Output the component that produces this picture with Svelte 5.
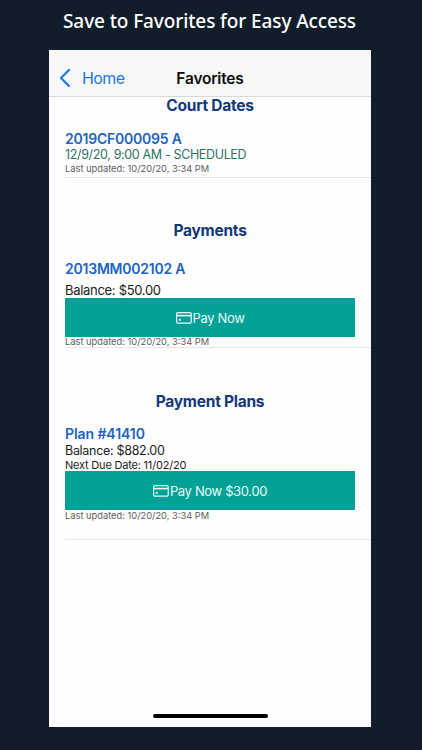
<script lang="ts">
  interface Favorite {
    kind: string;
    heading: string;
    title: string;
    status?: string;
    balance?: string;
    due?: string;
    pay?: string;
    updated: string;
  }

  const favorites: Favorite[] = [
    {
      kind: 'court',
      heading: 'Court Dates',
      title: '2019CF000095 A',
      status: '12/9/20, 9:00 AM - SCHEDULED',
      updated: '10/20/20, 3:34 PM',
    },
    {
      kind: 'payment',
      heading: 'Payments',
      title: '2013MM002102 A',
      balance: '$50.00',
      pay: 'Pay Now',
      updated: '10/20/20, 3:34 PM',
    },
    {
      kind: 'plan',
      heading: 'Payment Plans',
      title: 'Plan #41410',
      balance: '$882.00',
      due: '11/02/20',
      pay: 'Pay Now $30.00',
      updated: '10/20/20, 3:34 PM',
    },
  ];
</script>

<div class="promo">
  <h1 class="caption"><span>Save to Favorites for Easy Access</span></h1>

  <main class="phone">
    <header class="navbar">
      <a class="back" href="#home">
        <svg width="12" height="20" viewBox="0 0 12 20" fill="none" stroke="currentColor" stroke-width="2.3">
          <path stroke-linecap="round" stroke-linejoin="round" d="M10 2 2 10l8 8" />
        </svg>
        <span>Home</span>
      </a>
      <span class="nav-title">Favorites</span>
    </header>

    {#each favorites as item}
      <section class={item.kind}>
        <h2><span>{item.heading}</span></h2>
        <div class="entry">
          <a class="title" href="#detail">{item.title}</a>
          {#if item.status}
            <p class="status">{item.status}</p>
          {/if}
          {#if item.balance}
            <p class="balance">Balance: {item.balance}</p>
          {/if}
          {#if item.due}
            <p class="due">Next Due Date: {item.due}</p>
          {/if}
          {#if item.pay}
            <button class="pay">
              <svg width="16" height="12" viewBox="0 0 16 12" fill="none" stroke="currentColor">
                <rect x="0.6" y="0.6" width="14.6" height="10.6" rx="1.2" stroke-width="1.2" />
                <path d="M0.6 3.6h14.6" stroke-width="1.6" />
                <path d="M2.8 7.8h1.9" stroke-width="1.9" />
              </svg>
              <span>{item.pay}</span>
            </button>
          {/if}
          <p class="updated">Last updated: {item.updated}</p>
        </div>
      </section>
    {/each}

    <div class="home-indicator"></div>
  </main>
</div>

<style>
  .promo {
    box-sizing: border-box;
    width: 422px;
    height: 750px;
    background: #111d2a;
    font-family: Inter, 'Liberation Sans', sans-serif;
    overflow: hidden;
  }
  .caption {
    margin: 0;
    height: 50px;
    padding-top: 8px;
    box-sizing: border-box;
    text-align: center;
    font-family: 'Noto Sans', 'Open Sans', sans-serif;
    font-size: 19px;
    font-weight: 500;
    letter-spacing: -0.11px;
    line-height: 27px;
    color: #fff;
    white-space: nowrap;
  }
  .caption span {
    margin-right: 3px;
  }
  .phone {
    display: flex;
    flex-direction: column;
    box-sizing: border-box;
    width: 322px;
    height: 677px;
    margin-left: 49px;
    background: #fefefe;
  }
  .navbar {
    display: grid;
    grid-template-columns: 1fr auto 1fr;
    align-items: center;
    box-sizing: border-box;
    flex: none;
    height: 47px;
    padding: 10px 10px 0;
    background: #f7f7f7;
    border-bottom: 1px solid #d9d9da;
  }
  .back {
    display: flex;
    align-items: center;
    gap: 11px;
    color: #2179e8;
    font-size: 16px;
    letter-spacing: -0.6px;
    text-decoration: none;
  }
  .nav-title {
    font-size: 15.5px;
    font-weight: 600;
    letter-spacing: -0.2px;
    color: #0b0b0b;
  }
  section {
    flex: none;
    box-sizing: border-box;
  }
  .court {
    height: 123px;
  }
  .payment {
    height: 171px;
  }
  .plan {
    height: 220px;
  }
  h2 {
    margin: 0;
    height: 34px;
    text-align: center;
    font-size: 15.5px;
    font-weight: 700;
    letter-spacing: -0.25px;
    line-height: 18px;
    color: #12387c;
  }
  .payment h2 {
    height: 41px;
    padding-top: 2px;
    box-sizing: border-box;
  }
  .plan h2 {
    height: 35px;
    padding-top: 2px;
    box-sizing: border-box;
  }
  .entry {
    display: flex;
    flex-direction: column;
    box-sizing: border-box;
    margin-left: 16px;
    padding-right: 16px;
    border-bottom: 1px solid #e4e5e7;
  }
  .court .entry {
    height: 47px;
  }
  .payment .entry {
    height: 87px;
  }
  .plan .entry {
    height: 114px;
  }
  p {
    margin: 0;
    white-space: nowrap;
  }
  .title {
    font-size: 14px;
    font-weight: 600;
    letter-spacing: -0.22px;
    line-height: 16px;
    color: #2063c0;
    text-decoration: none;
  }
  .plan .title {
    letter-spacing: -0.08px;
  }
  .payment .title {
    margin-bottom: 5px;
  }
  .status {
    font-size: 12.5px;
    letter-spacing: -0.35px;
    line-height: 16.5px;
    color: #2c7466;
  }
  .balance {
    font-size: 13px;
    letter-spacing: -0.3px;
    line-height: 16px;
    color: #1c1c1c;
  }
  .plan .balance {
    font-size: 12.5px;
    line-height: 18px;
  }
  .due {
    font-size: 11px;
    letter-spacing: -0.2px;
    line-height: 11px;
    color: #1c1c1c;
  }
  .pay {
    display: flex;
    align-items: center;
    justify-content: center;
    gap: 1px;
    flex: none;
    height: 39px;
    padding: 0;
    border: 0;
    background: #02a197;
    color: #e9fbf9;
    font-family: inherit;
    font-size: 13px;
    letter-spacing: -0.35px;
    cursor: pointer;
  }
  .updated {
    font-size: 9.3px;
    line-height: 10px;
    color: #5c5c5c;
  }
  .plan .updated {
    padding-top: 1px;
  }
  .home-indicator {
    width: 115px;
    height: 4px;
    margin: auto auto 9px;
    border-radius: 2px;
    background: #000;
  }
</style>
